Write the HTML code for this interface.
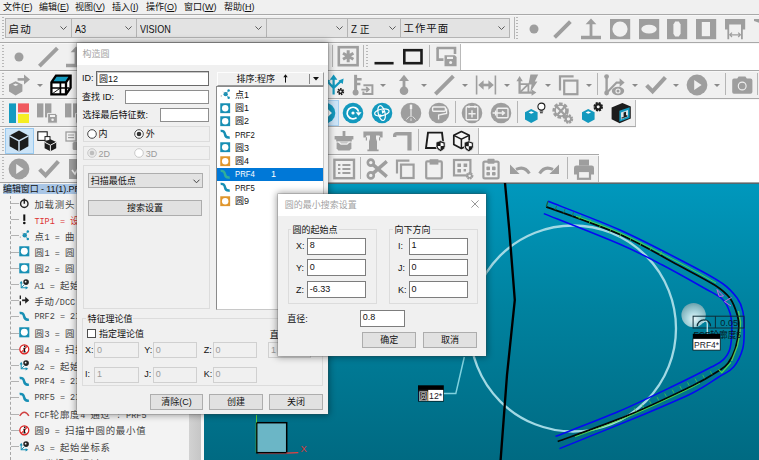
<!DOCTYPE html>
<html lang="zh-CN"><head><meta charset="utf-8"><title>构造圆</title>
<style>
html,body{margin:0;padding:0;background:#fff;}
body{width:759px;height:460px;overflow:hidden;font-family:"Liberation Sans","Noto Sans CJK SC",sans-serif;}
#root{position:relative;width:759px;height:460px;overflow:hidden;}
#root div,#root svg{position:absolute;}
.t{white-space:nowrap;line-height:12px;}
.ic{overflow:visible;}
.grip{width:2px;background-image:repeating-linear-gradient(180deg,#b8b8b8 0,#b8b8b8 1px,transparent 1px,transparent 3px);}
.sep{width:1px;background:#b5b5b5;}
.vline{width:0;border-left:1px dashed #a6a6a6;}
.hline{height:0;border-top:1px solid #b2b2b2;}
.inp{background:#fff;border:1px solid #7a7a7a;box-sizing:border-box;}
.inpd{background:#f0f0f0;border:1px solid #d0d0d0;box-sizing:border-box;}
.btn{background:#e1e1e1;border:1px solid #adadad;box-sizing:border-box;text-align:center;font-size:9px;line-height:13px;color:#111;}
.grp{border:1px solid #dcdcdc;box-sizing:border-box;}
u{text-decoration:underline;}
.inp{background:#fff;border:1px solid #6a6a6a;box-sizing:border-box;box-shadow:inset 1px 1px 0 #c8c8c8;}
.inp2{background:#fff;border:1px solid #8e8e8e;box-sizing:border-box;}
.inp3{background:#fff;border:1px solid #7d7d7d;box-sizing:border-box;}
.tr{font-family:"Liberation Mono","Noto Sans CJK SC",monospace;}
.tr .m{font-family:"Liberation Mono",monospace;font-size:8.5px;letter-spacing:0;}
.tr .c{font-family:"Noto Sans CJK SC","Liberation Sans",sans-serif;font-size:9.4px;letter-spacing:0.8px;}
.lt{display:inline-block;transform:scaleX(0.86);transform-origin:0 50%;}

</style></head>
<body>
<div id="root">
<div style="left:0px;top:0px;width:759px;height:14px;background:#f0f0f0"></div>
<div class="t" style="left:3px;top:1px;font-size:9px;color:#111;line-height:12px">文件(<u>F</u>)</div>
<div class="t" style="left:39px;top:1px;font-size:9px;color:#111;line-height:12px">编辑(<u>E</u>)</div>
<div class="t" style="left:75px;top:1px;font-size:9px;color:#111;line-height:12px">视图(<u>V</u>)</div>
<div class="t" style="left:112px;top:1px;font-size:9px;color:#111;line-height:12px">插入(<u>I</u>)</div>
<div class="t" style="left:146px;top:1px;font-size:9px;color:#111;line-height:12px">操作(<u>O</u>)</div>
<div class="t" style="left:184px;top:1px;font-size:9px;color:#111;line-height:12px">窗口(<u>W</u>)</div>
<div class="t" style="left:224px;top:1px;font-size:9px;color:#111;line-height:12px">帮助(<u>H</u>)</div>
<div style="left:0px;top:14px;width:759px;height:169px;background:#fff"></div>
<div style="left:0px;top:14px;width:759px;height:28px;background:#f0f0f0;box-sizing:border-box"></div>
<div style="left:0px;top:42px;width:461px;height:28px;background:#f0f0f0;border-right:1px solid #b9b9b9;box-sizing:border-box"></div>
<div style="left:0px;top:70px;width:759px;height:28px;background:#f0f0f0;box-sizing:border-box"></div>
<div style="left:0px;top:98px;width:636.4px;height:28px;background:#f0f0f0;border-right:1px solid #b9b9b9;box-sizing:border-box"></div>
<div style="left:0px;top:126px;width:479px;height:28px;background:#f0f0f0;border-right:1px solid #b9b9b9;box-sizing:border-box"></div>
<div style="left:0px;top:154px;width:599px;height:28px;background:#f0f0f0;border-right:1px solid #b9b9b9;box-sizing:border-box"></div>
<div style="left:0px;top:14px;width:759px;height:1px;background:#a9a9a9"></div>
<div style="left:0px;top:15px;width:759px;height:1px;background:#f7f7f7"></div>
<div style="left:0px;top:42px;width:759px;height:1px;background:#a9a9a9"></div>
<div style="left:0px;top:43px;width:759px;height:1px;background:#f7f7f7"></div>
<div style="left:0px;top:70px;width:759px;height:1px;background:#a9a9a9"></div>
<div style="left:0px;top:71px;width:759px;height:1px;background:#f7f7f7"></div>
<div style="left:0px;top:98px;width:759px;height:1px;background:#a9a9a9"></div>
<div style="left:0px;top:99px;width:759px;height:1px;background:#f7f7f7"></div>
<div style="left:0px;top:126px;width:636.4px;height:1px;background:#a9a9a9"></div>
<div style="left:0px;top:127px;width:636.4px;height:1px;background:#f7f7f7"></div>
<div style="left:0px;top:154px;width:599px;height:1px;background:#a9a9a9"></div>
<div style="left:0px;top:155px;width:599px;height:1px;background:#f7f7f7"></div>
<div style="left:0px;top:182px;width:759px;height:1px;background:#a3a3a3"></div>
<div class="grip" style="left:2px;top:17px;height:22px"></div>
<div style="left:5px;top:18px;width:67px;height:20px;background:#e3e3e3;border:1px solid #b4b4b4;box-sizing:border-box"></div>
<div class="t" style="left:8.6px;top:22.9px;font-size:10.5px;color:#111;line-height:12px;transform:scaleX(1);transform-origin:0 50%"><span style="letter-spacing:1.2px">启动</span></div>
<svg class="ic" style="left:60.4px;top:25.8px" width="7" height="4.4" viewBox="0 0 8 5"><path d="M0.5 0.5L4 4L7.5 0.5" fill="none" stroke="#555" stroke-width="1.1"/></svg>
<div style="left:71px;top:18px;width:66px;height:20px;background:#e3e3e3;border:1px solid #b4b4b4;box-sizing:border-box"></div>
<div class="t" style="left:74.6px;top:22.9px;font-size:10.8px;color:#111;line-height:12px;transform:scaleX(0.84);transform-origin:0 50%">A3</div>
<svg class="ic" style="left:125.4px;top:25.8px" width="7" height="4.4" viewBox="0 0 8 5"><path d="M0.5 0.5L4 4L7.5 0.5" fill="none" stroke="#555" stroke-width="1.1"/></svg>
<div style="left:136px;top:18px;width:131px;height:20px;background:#e3e3e3;border:1px solid #b4b4b4;box-sizing:border-box"></div>
<div class="t" style="left:139.6px;top:22.9px;font-size:10.8px;color:#111;line-height:12px;transform:scaleX(0.84);transform-origin:0 50%">VISION</div>
<svg class="ic" style="left:255.4px;top:25.8px" width="7" height="4.4" viewBox="0 0 8 5"><path d="M0.5 0.5L4 4L7.5 0.5" fill="none" stroke="#555" stroke-width="1.1"/></svg>
<div style="left:266px;top:18px;width:82px;height:20px;background:#e3e3e3;border:1px solid #b4b4b4;box-sizing:border-box"></div>
<svg class="ic" style="left:336.4px;top:25.8px" width="7" height="4.4" viewBox="0 0 8 5"><path d="M0.5 0.5L4 4L7.5 0.5" fill="none" stroke="#555" stroke-width="1.1"/></svg>
<div style="left:347px;top:18px;width:54px;height:20px;background:#e3e3e3;border:1px solid #b4b4b4;box-sizing:border-box"></div>
<div class="t" style="left:350.6px;top:22.9px;font-size:10.6px;color:#111;line-height:12px;transform:scaleX(0.92);transform-origin:0 50%">Z 正</div>
<svg class="ic" style="left:389.4px;top:25.8px" width="7" height="4.4" viewBox="0 0 8 5"><path d="M0.5 0.5L4 4L7.5 0.5" fill="none" stroke="#555" stroke-width="1.1"/></svg>
<div style="left:400px;top:18px;width:110px;height:20px;background:#e3e3e3;border:1px solid #b4b4b4;box-sizing:border-box"></div>
<div class="t" style="left:403.6px;top:22.9px;font-size:10.4px;color:#111;line-height:12px;transform:scaleX(1);transform-origin:0 50%"><span style="letter-spacing:1px">工作平面</span></div>
<svg class="ic" style="left:498.4px;top:25.8px" width="7" height="4.4" viewBox="0 0 8 5"><path d="M0.5 0.5L4 4L7.5 0.5" fill="none" stroke="#555" stroke-width="1.1"/></svg>
<div class="sep" style="left:513.5px;top:17px;height:22px"></div>
<div class="grip" style="left:516px;top:17px;height:22px"></div>
<svg class="ic" style="left:521.5px;top:16.5px" width="24" height="24" viewBox="0 0 24 24"><circle cx="12" cy="12" r="4.5" fill="#9e9e9e"/></svg>
<svg class="ic" style="left:550.25px;top:16.5px" width="24" height="24" viewBox="0 0 24 24"><path d="M4.6 20.4L20.4 4.6" stroke="#9e9e9e" stroke-width="3.9" fill="none"/></svg>
<svg class="ic" style="left:579.0px;top:16.5px" width="24" height="24" viewBox="0 0 24 24"><path d="M2 18.8H22V22.2H2Z M10.6 18.8V7.2H6.6L12 1.6L17.4 7.2H13.4V18.8Z" fill="#9e9e9e"/></svg>
<svg class="ic" style="left:607.75px;top:16.5px" width="24" height="24" viewBox="0 0 24 24"><rect x="2" y="2" width="20.2" height="20.2" fill="#9e9e9e"/><circle cx="12" cy="12.1" r="7.6" fill="#f0f0f0"/></svg>
<svg class="ic" style="left:636.5px;top:16.5px" width="24" height="24" viewBox="0 0 24 24"><rect x="2" y="2" width="20.2" height="20.2" fill="#9e9e9e"/><ellipse cx="12" cy="12.1" rx="7.7" ry="4.4" fill="#f0f0f0"/></svg>
<svg class="ic" style="left:665.25px;top:16.5px" width="24" height="24" viewBox="0 0 24 24"><rect x="2" y="2" width="20.2" height="20.2" fill="#9e9e9e"/><path d="M10.2 4.6H13.8L15.6 7.4V16.8L13.8 19.6H10.2L8.4 16.8V7.4Z" fill="#f0f0f0"/></svg>
<svg class="ic" style="left:694.0px;top:16.5px" width="24" height="24" viewBox="0 0 24 24"><rect x="2" y="2" width="20.2" height="20.2" fill="#9e9e9e"/><rect x="7.8" y="5" width="8.2" height="14.2" fill="#f0f0f0"/></svg>
<svg class="ic" style="left:722.75px;top:16.5px" width="24" height="24" viewBox="0 0 24 24"><path d="M2 2H22.2V12.6H19.8V22.2H18V7.6H6.2V22.2H4.4V12.6H2Z" fill="#9e9e9e"/><path d="M6.8 17.8H17.4M9 15.6L6.8 17.8L9 20M15.2 15.6L17.4 17.8L15.2 20" stroke="#9e9e9e" stroke-width="1.2" fill="none"/></svg>
<svg class="ic" style="left:751.5px;top:16.5px" width="24" height="24" viewBox="0 0 24 24"><path d="M2 2H22V6L8 6L2 4Z" fill="#9e9e9e"/></svg>
<div class="grip" style="left:2px;top:45px;height:22px"></div>
<svg class="ic" style="left:7.0px;top:45.0px" width="24" height="24" viewBox="0 0 24 24"><circle cx="12" cy="12" r="4.5" fill="#9e9e9e"/></svg>
<svg class="ic" style="left:35.7px;top:44.8px" width="24" height="24" viewBox="0 0 24 24"><path d="M3.4 21.2L21.4 3.2" stroke="#9e9e9e" stroke-width="3.9" fill="none"/></svg>
<svg class="ic" style="left:64.2px;top:45.0px" width="24" height="24" viewBox="0 0 24 24"><path d="M2 18.8H22V22.2H2Z M10.6 18.8V7.2H6.6L12 1.6L17.4 7.2H13.4V18.8Z" fill="#9e9e9e"/></svg>
<div class="sep" style="left:331.6px;top:45px;height:22px"></div>
<svg class="ic" style="left:336.0px;top:44.2px" width="24" height="24" viewBox="0 0 24 24"><rect x="2.8" y="3.2" width="18.8" height="18" fill="none" stroke="#9e9e9e" stroke-width="2.6"/><path d="M12.2 6.2V18.2M7 9.2L17.4 15.2M17.4 9.2L7 15.2" stroke="#9e9e9e" stroke-width="3" fill="none"/></svg>
<div class="sep" style="left:363.4px;top:45px;height:22px"></div>
<div class="grip" style="left:366px;top:45px;height:22px"></div>
<svg class="ic" style="left:364.0px;top:45.0px" width="24" height="24" viewBox="0 0 24 24"><path d="M10.5 18.2H29.6" stroke="#1c1c1c" stroke-width="2.6" fill="none"/></svg>
<svg class="ic" style="left:399.0px;top:45.0px" width="24" height="24" viewBox="0 0 24 24"><rect x="5.3" y="5.2" width="17.2" height="13" fill="none" stroke="#1c1c1c" stroke-width="2.6"/></svg>
<div class="sep" style="left:429.4px;top:45px;height:22px"></div>
<svg class="ic" style="left:434.0px;top:45.0px" width="24" height="24" viewBox="0 0 24 24"><path d="M2.6 3H21V9" stroke="#9e9e9e" stroke-width="2.6" fill="none"/><path d="M3.6 3V14.6H9.5" stroke="#9e9e9e" stroke-width="2.6" fill="none"/><path d="M10.5 10.2H20.8L22.6 12V21.2H10.5Z" fill="#9e9e9e"/><rect x="13" y="11.8" width="6" height="2.2" fill="#f0f0f0"/><circle cx="16.6" cy="17.6" r="1.5" fill="#f0f0f0"/></svg>
<div class="grip" style="left:2px;top:73px;height:22px"></div>
<svg class="ic" style="left:7.0px;top:73.0px" width="24" height="24" viewBox="0 0 24 24"><path d="M2 11.4L8.6 8.2L15.4 11.4V18.6L8.6 22.4L2 18.6Z" fill="#9e9e9e"/><path d="M6 11.7L8.6 10.4L11.4 11.7L8.6 13.1Z" fill="#f0f0f0"/><path d="M10.6 6.4H18.4" stroke="#9e9e9e" stroke-width="2.6" fill="none"/><path d="M17 1.4L23 6.4L17 11.4Z" fill="#9e9e9e"/></svg>
<svg class="ic" style="left:37px;top:83.5px" width="6" height="3" viewBox="0 0 6 3"><path d="M0 0H6L3 3Z" fill="#8a8a8a"/></svg>
<svg class="ic" style="left:49.0px;top:73.0px" width="24" height="24" viewBox="0 0 24 24"><path d="M7 2.6H21.6V14.6L17 21.4H2.4V9.4Z" fill="#fff"/><path d="M7 2.6H21.6L17 9.4H2.4Z" fill="#1399be"/><path d="M7 2.6H21.6V14.6L17 21.4H2.4V9.4Z M2.4 9.4H17V21.4M17 9.4L21.6 2.6" fill="none" stroke="#000" stroke-width="2.3" stroke-linejoin="miter"/><path d="M11.4 9.4V21.4M2.4 15H20" fill="none" stroke="#000" stroke-width="1.7"/><path d="M2.4 21.4L11.4 15" fill="none" stroke="#000" stroke-width="0.9"/></svg>
<svg class="ic" style="left:324.0px;top:73.0px" width="24" height="24" viewBox="0 0 24 24"><path d="M9.6 21.6V11.5M9.6 15L3.6 8.4M9.6 15L17.4 7.6" stroke="#1399be" stroke-width="2.2" fill="none"/><path d="M9.6 1.6L13.4 6.8H5.8Z" fill="#1399be"/><path d="M9.6 6V12" stroke="#1399be" stroke-width="2.2"/><path d="M1.4 5.6L2.2 11L6.6 7.8Z M19.6 5.6L18.8 11L14.4 7.8Z" fill="#1399be"/><circle cx="16.6" cy="18.6" r="2.6" fill="none" stroke="#1c1c1c" stroke-width="2" stroke-dasharray="1.4 0.9"/><circle cx="16.6" cy="18.6" r="1.7" fill="none" stroke="#1c1c1c" stroke-width="1.2"/></svg>
<svg class="ic" style="left:350.6px;top:73.0px" width="24" height="24" viewBox="0 0 24 24"><path d="M4.6 1.8V18.6" stroke="#9e9e9e" stroke-width="3"/><circle cx="4.6" cy="19.4" r="3" fill="#9e9e9e"/><path d="M4.6 6.2H10.6M4.6 11H9.4" stroke="#9e9e9e" stroke-width="2.6"/><path d="M12.4 12.2H21.4V21H12.4V18.4" stroke="#9e9e9e" stroke-width="2" fill="none"/><path d="M10.4 16.6H17.4M15.2 14.2L17.8 16.6L15.2 19" stroke="#9e9e9e" stroke-width="1.7" fill="none"/></svg>
<svg class="ic" style="left:379.8px;top:83.5px" width="6" height="3" viewBox="0 0 6 3"><path d="M0 0H6L3 3Z" fill="#8a8a8a"/></svg>
<svg class="ic" style="left:392.0px;top:73.0px" width="24" height="24" viewBox="0 0 24 24"><path d="M12 6V17" stroke="#9e9e9e" stroke-width="2.8"/><path d="M12 1.8L17 8H7Z" fill="#9e9e9e"/><circle cx="12" cy="17.8" r="4.3" fill="#9e9e9e"/></svg>
<svg class="ic" style="left:421px;top:83.5px" width="6" height="3" viewBox="0 0 6 3"><path d="M0 0H6L3 3Z" fill="#8a8a8a"/></svg>
<svg class="ic" style="left:432.4px;top:73.0px" width="24" height="24" viewBox="0 0 24 24"><path d="M3.4 21.2L21.4 3.2" stroke="#9e9e9e" stroke-width="3.9" fill="none"/></svg>
<svg class="ic" style="left:462.4px;top:83.5px" width="6" height="3" viewBox="0 0 6 3"><path d="M0 0H6L3 3Z" fill="#8a8a8a"/></svg>
<svg class="ic" style="left:474.4px;top:73.0px" width="24" height="24" viewBox="0 0 24 24"><path d="M2.6 2.4V21.6M21.4 2.4V21.6" stroke="#9e9e9e" stroke-width="1.6"/><path d="M7 12H17" stroke="#9e9e9e" stroke-width="2.6"/><path d="M4.2 12L9.6 7.2V16.8Z M19.8 12L14.4 7.2V16.8Z" fill="#9e9e9e"/></svg>
<svg class="ic" style="left:503.5px;top:83.5px" width="6" height="3" viewBox="0 0 6 3"><path d="M0 0H6L3 3Z" fill="#8a8a8a"/></svg>
<svg class="ic" style="left:515.4px;top:73.0px" width="24" height="24" viewBox="0 0 24 24"><path d="M15.4 1.6H23.2L19.8 8.4H22.4L15.2 19.6L16.6 11.6H13.4Z" fill="#9e9e9e"/><path d="M4.6 6.4V19.6H17.6" stroke="#9e9e9e" stroke-width="2.3" fill="none"/><path d="M4.6 3L7.8 8.2H1.4Z M21.4 19.6L16.6 22.8V16.4Z" fill="#9e9e9e"/><path d="M4.6 11.2H13.4V19.6M4.6 19.6L13.4 11.2" stroke="#9e9e9e" stroke-width="1.8" fill="none"/></svg>
<svg class="ic" style="left:544.6px;top:83.5px" width="6" height="3" viewBox="0 0 6 3"><path d="M0 0H6L3 3Z" fill="#8a8a8a"/></svg>
<svg class="ic" style="left:557.0px;top:73.0px" width="24" height="24" viewBox="0 0 24 24"><path d="M3 17.4V3.4H16.6" stroke="#9e9e9e" stroke-width="2.2" fill="none"/><rect x="7.2" y="7.6" width="13.2" height="13.6" stroke="#9e9e9e" stroke-width="2.2" fill="none"/></svg>
<svg class="ic" style="left:586px;top:83.5px" width="6" height="3" viewBox="0 0 6 3"><path d="M0 0H6L3 3Z" fill="#8a8a8a"/></svg>
<div class="sep" style="left:597px;top:73px;height:22px"></div>
<svg class="ic" style="left:602.0px;top:73.0px" width="24" height="24" viewBox="0 0 24 24"><path d="M4.6 4V20" stroke="#9e9e9e" stroke-width="2.4"/><circle cx="4.6" cy="3.6" r="2.4" fill="#9e9e9e"/><circle cx="4.6" cy="20" r="2.4" fill="#9e9e9e"/><path d="M5 19.6L14.6 9.6H19" stroke="#9e9e9e" stroke-width="2.2" fill="none"/><path d="M17.6 5.2L22.6 9.6L17.6 14Z" fill="#9e9e9e"/><ellipse cx="16" cy="18" rx="6.2" ry="4.2" fill="#9e9e9e"/><circle cx="16" cy="18" r="2.6" fill="#f0f0f0"/><circle cx="16" cy="18" r="1.5" fill="#9e9e9e"/></svg>
<svg class="ic" style="left:632px;top:83.5px" width="6" height="3" viewBox="0 0 6 3"><path d="M0 0H6L3 3Z" fill="#8a8a8a"/></svg>
<svg class="ic" style="left:644.0px;top:73.0px" width="24" height="24" viewBox="0 0 24 24"><path d="M2.6 12.4L8.6 18.4L21.4 4.4" stroke="#9e9e9e" stroke-width="4.1" fill="none"/></svg>
<svg class="ic" style="left:673px;top:83.5px" width="6" height="3" viewBox="0 0 6 3"><path d="M0 0H6L3 3Z" fill="#8a8a8a"/></svg>
<svg class="ic" style="left:685.0px;top:72.8px" width="24" height="24" viewBox="0 0 24 24"><circle cx="12" cy="12" r="10.4" fill="#9e9e9e"/><path d="M9.2 7L16.6 12L9.2 17Z" fill="#f0f0f0"/></svg>
<svg class="ic" style="left:714px;top:83.5px" width="6" height="3" viewBox="0 0 6 3"><path d="M0 0H6L3 3Z" fill="#8a8a8a"/></svg>
<div class="sep" style="left:725px;top:73px;height:22px"></div>
<svg class="ic" style="left:730.0px;top:73.0px" width="24" height="24" viewBox="0 0 24 24"><path d="M4 5.6H7.2L8.6 3.6H15.4L16.8 5.6H20.4Q22.4 5.6 22.4 7.4V19Q22.4 20.8 20.4 20.8H4Q2.2 20.8 2.2 19V7.4Q2.2 5.6 4 5.6Z" fill="#9e9e9e"/><circle cx="12.2" cy="13" r="3.9" fill="none" stroke="#f0f0f0" stroke-width="1.1"/></svg>
<div class="sep" style="left:757px;top:73px;height:22px"></div>
<div class="grip" style="left:2px;top:101px;height:22px"></div>
<svg class="ic" style="left:7.0px;top:101.0px" width="24" height="24" viewBox="0 0 24 24"><rect x="2" y="2.4" width="7" height="19.6" fill="#149bc0"/><rect x="11" y="2.4" width="11" height="9" fill="#f0595e"/><rect x="11" y="13" width="11" height="9" fill="#f5ee23"/></svg>
<svg class="ic" style="left:35.0px;top:101.0px" width="24" height="24" viewBox="0 0 24 24"><rect x="2" y="2.4" width="6.4" height="14" fill="#9e9e9e"/><rect x="10" y="2.4" width="6.4" height="14" fill="#9e9e9e"/><path d="M12.6 12.4H20.6L22.4 14.2V22.2H12.6Z" fill="#9e9e9e" stroke="#f0f0f0" stroke-width="1"/><rect x="15" y="14" width="5" height="2" fill="#f0f0f0"/><circle cx="17.6" cy="18.8" r="1.3" fill="#f0f0f0"/></svg>
<svg class="ic" style="left:63.0px;top:101.0px" width="24" height="24" viewBox="0 0 24 24"><rect x="2" y="2.4" width="6.4" height="14" fill="#9e9e9e"/><rect x="10" y="2.4" width="6.4" height="14" fill="#9e9e9e"/><path d="M12.6 12.4H20.6L22.4 14.2V22.2H12.6Z" fill="#9e9e9e" stroke="#f0f0f0" stroke-width="1"/><rect x="15" y="14" width="5" height="2" fill="#f0f0f0"/><circle cx="17.6" cy="18.8" r="1.3" fill="#f0f0f0"/></svg>
<div style="left:314px;top:100px;width:25px;height:26px;background:#cce4f7;border:1px solid #a6cff0;box-sizing:border-box"></div>
<svg class="ic" style="left:312.8px;top:101.2px" width="24" height="24" viewBox="0 0 24 24"><circle cx="12" cy="12" r="10.3" fill="#1399be"/><path d="M5 12H17M13.4 8L17.6 12L13.4 16" stroke="#fff" stroke-width="1.8" fill="none"/></svg>
<svg class="ic" style="left:341.0px;top:101.2px" width="24" height="24" viewBox="0 0 24 24"><circle cx="12" cy="12" r="10.3" fill="#1399be"/><path d="M17.6 10.6A5.8 5.8 0 1 0 15.6 16.6" stroke="#fff" stroke-width="1.7" fill="none"/><circle cx="12" cy="12" r="1.6" fill="#fff"/><path d="M14.6 11.2H20.6L17.6 14.8Z" fill="#fff"/></svg>
<svg class="ic" style="left:369.8px;top:101.2px" width="24" height="24" viewBox="0 0 24 24"><circle cx="12" cy="12" r="10.3" fill="#1399be"/><ellipse cx="12" cy="11.4" rx="7.4" ry="3.2" stroke="#fff" stroke-width="1.2" fill="none" transform="rotate(-12 12 12)"/><ellipse cx="11.6" cy="12" rx="3.4" ry="7.6" stroke="#fff" stroke-width="1.2" fill="none" transform="rotate(-14 12 12)"/><path d="M11.6 9L15.4 10.6L12.2 12.8Z M9.4 13L13 14.6L9.8 16.6Z" fill="#fff"/></svg>
<svg class="ic" style="left:398.5px;top:101.2px" width="24" height="24" viewBox="0 0 24 24"><circle cx="12" cy="12" r="10.3" fill="#9e9e9e"/><path d="M12 3.6V8" stroke="#f0f0f0" stroke-width="2.4"/><path d="M12 8V16" stroke="#f0f0f0" stroke-width="1.1"/><path d="M12 17.4V20M10.4 15.4L7.4 18.6M13.6 15.4L16.6 18.6" stroke="#f0f0f0" stroke-width="1" opacity="0.85"/></svg>
<svg class="ic" style="left:426.8px;top:101.2px" width="24" height="24" viewBox="0 0 24 24"><circle cx="12" cy="12" r="10.3" fill="#9e9e9e"/><rect x="5.6" y="6" width="12.8" height="4.2" rx="1" stroke="#f0f0f0" stroke-width="1.4" fill="none"/><path d="M18.4 8.2H19.6V12.4L11.6 14V18.4" stroke="#f0f0f0" stroke-width="1.3" fill="none"/></svg>
<div class="sep" style="left:455.4px;top:101px;height:22px"></div>
<svg class="ic" style="left:460.3px;top:101.2px" width="24" height="24" viewBox="0 0 24 24"><circle cx="12" cy="12" r="10.3" fill="#9e9e9e"/><rect x="6.2" y="5.8" width="11.6" height="13" rx="1" stroke="#f0f0f0" stroke-width="1.4" fill="none"/><path d="M9 4.4V7M15 4.4V7M12 9.2V16.4M8.4 12.8H15.6" stroke="#f0f0f0" stroke-width="1.4"/></svg>
<svg class="ic" style="left:489.0px;top:101.2px" width="24" height="24" viewBox="0 0 24 24"><circle cx="12" cy="12" r="10.3" fill="#9e9e9e"/><rect x="8" y="7.2" width="11" height="9.6" rx="1" stroke="#f0f0f0" stroke-width="1.4" fill="none"/><path d="M3.6 12H15M6.6 9.6V14.4M13 10L15.4 12L13 14" stroke="#f0f0f0" stroke-width="1.4" fill="none"/></svg>
<div class="sep" style="left:517px;top:101px;height:22px"></div>
<svg class="ic" style="left:522.5px;top:101.0px" width="24" height="24" viewBox="0 0 24 24"><g transform="translate(2 7.6) scale(0.94)"><path d="M0 4L6.6 0.4L13.4 4V11.6L6.6 15.4L0 11.6Z" fill="#1399be"/><path d="M3.8 4.1L6.6 2.7L9.6 4.1L6.6 5.6Z" fill="#fff"/></g><circle cx="18.4" cy="5.6" r="3.5" fill="#fff" stroke="#1c1c1c" stroke-width="1.1"/><path d="M16.6 10H20.2M17 11.8H19.8" stroke="#1c1c1c" stroke-width="1.1"/></svg>
<svg class="ic" style="left:550.5px;top:101.0px" width="24" height="24" viewBox="0 0 24 24"><circle cx="9.6" cy="9.6" r="6.6" fill="none" stroke="#9e9e9e" stroke-width="3.2" stroke-dasharray="3.4 1.5"/><circle cx="9.6" cy="9.6" r="5.6" fill="none" stroke="#9e9e9e" stroke-width="1.6"/><path d="M5.6 5.4L14.4 14.4M14 5.6L6.6 13.4" stroke="#9e9e9e" stroke-width="2.2"/><circle cx="17.4" cy="18" r="3.3" fill="none" stroke="#9e9e9e" stroke-width="3" stroke-dasharray="1.75 0.84"/><circle cx="17.4" cy="18" r="2.6" fill="none" stroke="#9e9e9e" stroke-width="1.8"/></svg>
<svg class="ic" style="left:579.8px;top:101.0px" width="24" height="24" viewBox="0 0 24 24"><g transform="translate(2 7.6) scale(0.94)"><path d="M0 4L6.6 0.4L13.4 4V11.6L6.6 15.4L0 11.6Z" fill="#1399be"/><path d="M3.8 4.1L6.6 2.7L9.6 4.1L6.6 5.6Z" fill="#fff"/></g><circle cx="18.2" cy="5.8" r="3.3" fill="none" stroke="#1c1c1c" stroke-width="3" stroke-dasharray="1.75 0.84"/><circle cx="18.2" cy="5.8" r="2.6" fill="none" stroke="#1c1c1c" stroke-width="2"/></svg>
<svg class="ic" style="left:608.8px;top:101.0px" width="24" height="24" viewBox="0 0 24 24"><path d="M2.6 6.6L13.4 2L21.8 5.4V17.6L10.6 22.2L2.6 18.2Z" fill="#1c1c1c"/><path d="M10.4 9.8L20.6 6.2V17L10.4 20.8Z" fill="#1399be"/><path d="M12 11.4L19 9V15.6L12 18.4Z" fill="#d9e3e6"/><path d="M14.6 11.6L17 10.8V14.2H18.4V15.6L12.6 17.8V16.2H14.6Z" fill="#1c1c1c"/></svg>
<div class="grip" style="left:2px;top:129px;height:22px"></div>
<div style="left:5px;top:128px;width:29px;height:26px;background:#cce4f7;border:1px solid #99c9ef;box-sizing:border-box"></div>
<svg class="ic" style="left:7.0px;top:129.0px" width="24" height="24" viewBox="0 0 24 24"><path d="M12 1.6L21.4 6.4V17.2L12 22.4L2.6 17.2V6.4Z" fill="#1c1c1c"/><path d="M2.6 6.8L12 11.8L21.4 6.8M12 11.8V22.4" stroke="#cfe3f4" stroke-width="1.5" fill="none"/></svg>
<svg class="ic" style="left:35.0px;top:129.0px" width="24" height="24" viewBox="0 0 24 24"><rect x="2.8" y="2.8" width="9.4" height="8.6" fill="#fff" stroke="#1c1c1c" stroke-width="1.1"/><rect x="10" y="7.6" width="5" height="4.4" fill="#fff" stroke="#1c1c1c" stroke-width="1"/><path d="M15.4 10.2L21.2 13V19.2L15.4 22.2L9.6 19.2V13Z" fill="#1c1c1c"/><path d="M9.6 13.2L15.4 16.2L21.2 13.2M15.4 16.2V22.2" stroke="#f0f0f0" stroke-width="1" fill="none"/></svg>
<svg class="ic" style="left:63.0px;top:129.0px" width="24" height="24" viewBox="0 0 24 24"><rect x="3" y="3" width="10" height="9" fill="none" stroke="#9e9e9e" stroke-width="1.3"/><path d="M5 6H11M5 8.6H11" stroke="#9e9e9e" stroke-width="1.1"/><rect x="9.6" y="13" width="8" height="8" rx="1.5" fill="#9e9e9e"/></svg>
<svg class="ic" style="left:332.0px;top:129.0px" width="24" height="24" viewBox="0 0 24 24"><path d="M10.6 2H13.4V7H21.4V10.6H19.8V12.6H4.2V10.6H2.6V7H10.6Z" fill="#9e9e9e"/><path d="M4.6 13.6H19.4V19.6L17.6 21.6H6.4L4.6 19.6Z" fill="#9e9e9e"/><path d="M6.4 12.8L9 15H15L17.6 12.8" stroke="#f0f0f0" stroke-width="1.3" fill="none"/></svg>
<svg class="ic" style="left:360.8px;top:129.0px" width="24" height="24" viewBox="0 0 24 24"><path d="M2.4 2.6H21.6V8.4H19.4L18.4 6.6H15V9.4L16 12.6V20.6H17.6V22.2H6.4V20.6H8V12.6L9 9.4V6.6H5.6L4.6 8.4H2.4Z" fill="#9e9e9e"/><path d="M5.4 8.2V11.4M18.6 8.2V11.4" stroke="#9e9e9e" stroke-width="1.2"/></svg>
<svg class="ic" style="left:389.6px;top:129.0px" width="24" height="24" viewBox="0 0 24 24"><path d="M3 6.6Q3 3 7 3H21.6V21.6H17.4V6.6H6.4V8H3Z" fill="#9e9e9e"/></svg>
<div class="sep" style="left:418px;top:129px;height:22px"></div>
<svg class="ic" style="left:423.0px;top:129.0px" width="24" height="24" viewBox="0 0 24 24"><path d="M5 3.6H19L20.8 19H3Z" fill="#f6f6f6" stroke="#1c1c1c" stroke-width="1.9" stroke-linejoin="miter"/><path d="M17.6 11.6L22.2 13.2V17.6Q22.2 20.6 17.6 22.6Q13 20.6 13 17.6V13.2Z" fill="#1c1c1c" stroke="#f0f0f0" stroke-width="0.8"/><path d="M17.6 13.6V21M14.4 16.8H20.8" stroke="#fff" stroke-width="0.0"/><path d="M17.6 13.4L20.6 14.4V17H17.6Z M14.6 17H17.6V20.8Q14.6 19.4 14.6 17Z" fill="#fff"/></svg>
<svg class="ic" style="left:451.0px;top:129.0px" width="24" height="24" viewBox="0 0 24 24"><path d="M10.4 2.6L18.2 6.2V15.4L10.4 19.4L2.8 15.4V6.2Z" fill="#f6f6f6" stroke="#1c1c1c" stroke-width="1.7" stroke-linejoin="round"/><path d="M2.8 6.4L10.4 10.2L18.2 6.4M10.4 10.2V19.4" stroke="#1c1c1c" stroke-width="1.5" fill="none"/><path d="M17.8 11.8L22.4 13.4V17.8Q22.4 20.8 17.8 22.8Q13.2 20.8 13.2 17.8V13.4Z" fill="#1c1c1c" stroke="#f0f0f0" stroke-width="0.8"/><path d="M17.8 13.6L20.8 14.6V17.2H17.8Z M14.8 17.2H17.8V21Q14.8 19.6 14.8 17.2Z" fill="#fff"/></svg>
<div class="grip" style="left:2px;top:157px;height:22px"></div>
<svg class="ic" style="left:7.0px;top:157.4px" width="24" height="24" viewBox="0 0 24 24"><circle cx="12" cy="12" r="10.4" fill="#9e9e9e"/><path d="M9.2 7L16.6 12L9.2 17Z" fill="#f0f0f0"/></svg>
<svg class="ic" style="left:36.5px;top:157.0px" width="24" height="24" viewBox="0 0 24 24"><path d="M2.6 12.4L8.6 18.4L21.4 4.4" stroke="#9e9e9e" stroke-width="4.1" fill="none"/></svg>
<svg class="ic" style="left:67.0px;top:157.4px" width="24" height="24" viewBox="0 0 24 24"><rect x="2" y="2" width="14" height="20" fill="#9e9e9e"/><path d="M5 13L8 17L13 8" stroke="#f0f0f0" stroke-width="1.6" fill="none"/></svg>
<svg class="ic" style="left:332.0px;top:157.0px" width="24" height="24" viewBox="0 0 24 24"><rect x="2.4" y="2.8" width="19.6" height="18.4" fill="none" stroke="#9e9e9e" stroke-width="2.4"/><path d="M6 8H8.4M6 12H8.4M6 16H8.4M10.4 8H18.4M10.4 12H18.4M10.4 16H18.4" stroke="#9e9e9e" stroke-width="2.2"/></svg>
<div class="sep" style="left:360px;top:157px;height:22px"></div>
<svg class="ic" style="left:365.0px;top:157.0px" width="24" height="24" viewBox="0 0 24 24"><circle cx="5.8" cy="5.6" r="3" fill="none" stroke="#9e9e9e" stroke-width="2.6"/><circle cx="5.8" cy="18.4" r="3" fill="none" stroke="#9e9e9e" stroke-width="2.6"/><path d="M8 7.6L21.8 19.6M8 16.4L21.8 4.4" stroke="#9e9e9e" stroke-width="3.4" fill="none"/></svg>
<svg class="ic" style="left:393.0px;top:157.0px" width="24" height="24" viewBox="0 0 24 24"><path d="M4 16.6V3.6H16.4" stroke="#9e9e9e" stroke-width="2.2" fill="none"/><rect x="8" y="7.6" width="12.6" height="13.4" stroke="#9e9e9e" stroke-width="2.2" fill="none"/></svg>
<svg class="ic" style="left:422.0px;top:157.0px" width="24" height="24" viewBox="0 0 24 24"><rect x="4.2" y="4.4" width="15.6" height="17" rx="1" fill="none" stroke="#9e9e9e" stroke-width="2.2"/><rect x="7.6" y="2.2" width="8.8" height="5.4" fill="#9e9e9e"/></svg>
<svg class="ic" style="left:451.0px;top:157.0px" width="24" height="24" viewBox="0 0 24 24"><rect x="3" y="3" width="16.4" height="15.4" fill="none" stroke="#9e9e9e" stroke-width="2.2"/><path d="M6.4 6.4H10V10H6.4Z M12.6 6.4H16.2V10H12.6Z M6.4 12H10V15.6H6.4Z M12.6 12H15V14.4H12.6Z" fill="#9e9e9e"/><circle cx="18.6" cy="18.8" r="2.8" fill="#f0f0f0"/><circle cx="18.6" cy="18.8" r="2.6" fill="none" stroke="#9e9e9e" stroke-width="2.4" stroke-dasharray="1.5 0.7"/><circle cx="18.6" cy="18.8" r="2" fill="none" stroke="#9e9e9e" stroke-width="1.4"/></svg>
<svg class="ic" style="left:479.0px;top:157.0px" width="24" height="24" viewBox="0 0 24 24"><rect x="4.4" y="4.6" width="15.2" height="16.8" rx="1.4" fill="none" stroke="#9e9e9e" stroke-width="2.2"/><rect x="8.4" y="1.8" width="7.2" height="5" rx="1" fill="#9e9e9e"/><rect x="7.4" y="9.6" width="3.6" height="3.6" rx="0.8" fill="#9e9e9e"/><rect x="13" y="9.6" width="3.6" height="3.6" rx="0.8" fill="#9e9e9e"/><rect x="7.4" y="15" width="3.6" height="3.6" rx="0.8" fill="#9e9e9e"/><rect x="13" y="15" width="3.6" height="3.6" rx="0.8" fill="#9e9e9e"/></svg>
<svg class="ic" style="left:508.0px;top:157.0px" width="24" height="24" viewBox="0 0 24 24"><path d="M8 12.4Q16.6 8.4 21.4 16.6" stroke="#9e9e9e" stroke-width="3" fill="none"/><path d="M2 7.4V17H11.6Z" fill="#9e9e9e"/></svg>
<svg class="ic" style="left:537.0px;top:157.0px" width="24" height="24" viewBox="0 0 24 24"><path d="M16 12.4Q7.4 8.4 2.6 16.6" stroke="#9e9e9e" stroke-width="3" fill="none"/><path d="M22 7.4V17H12.4Z" fill="#9e9e9e"/></svg>
<div class="sep" style="left:567px;top:157px;height:22px"></div>
<svg class="ic" style="left:572.0px;top:157.0px" width="24" height="24" viewBox="0 0 24 24"><rect x="7" y="2.6" width="10" height="6" fill="#9e9e9e"/><path d="M4.4 8.4H19.6Q22 8.4 22 10.8V17.4H2V10.8Q2 8.4 4.4 8.4Z" fill="#9e9e9e"/><rect x="6" y="14" width="12" height="7.8" fill="#f0f0f0" stroke="#9e9e9e" stroke-width="2.2"/></svg>
<div style="left:0px;top:183px;width:188.5px;height:277px;background:#f3f3f3"></div>
<div style="left:188.5px;top:183px;width:12px;height:277px;background:linear-gradient(90deg,#d2d2d2,#c6c6c6)"></div>
<div style="left:200.5px;top:183px;width:3.5px;height:277px;background:#f6f6f6"></div>
<div style="left:3px;top:184px;width:75px;height:10px;background:#a9c6e6"></div>
<div class="t" style="left:3px;top:183px;font-size:9px;color:#111;line-height:12px;letter-spacing:-0.1px">编辑窗口 - 11(1).PR</div>
<div class="vline" style="left:10px;top:196px;height:264px"></div>
<div class="hline" style="left:11px;top:203.0px;width:8px"></div>
<svg class="ic" style="left:19.2px;top:197.7px" width="10.6" height="10.6" viewBox="0 0 24 24"><circle cx="12" cy="13" r="8.4" fill="none" stroke="#222" stroke-width="3.2"/><path d="M12 1.5V13" stroke="#222" stroke-width="3.4"/><path d="M12 2V12" stroke="#f3f3f3" stroke-width="0"/></svg>
<div class="t tr" style="left:34.4px;top:197.6px;font-size:9.5px;color:#444;line-height:12px;white-space:pre"><span class="c">加载测头</span></div>
<div class="hline" style="left:11px;top:219.2px;width:8px"></div>
<svg class="ic" style="left:19.2px;top:213.89999999999998px" width="10.6" height="10.6" viewBox="0 0 24 24"><path d="M12 1V15.5" stroke="#111" stroke-width="4.6"/><circle cx="12" cy="20.4" r="3" fill="#111"/></svg>
<div class="t tr" style="left:34.4px;top:213.79999999999998px;font-size:9.5px;color:#d33;line-height:12px;white-space:pre"><span class="m">TIP1 = </span><span class="c">设</span></div>
<div class="hline" style="left:11px;top:235.4px;width:8px"></div>
<svg class="ic" style="left:19.2px;top:230.1px" width="10.6" height="10.6" viewBox="0 0 24 24"><circle cx="13" cy="12" r="5" fill="#178fb4"/><circle cx="20" cy="3.6" r="2.8" fill="#178fb4"/><circle cx="20" cy="20.4" r="2.8" fill="#178fb4"/><path d="M13 12L20 3.6M13 12L20 20.4" stroke="#178fb4" stroke-width="1.4"/><circle cx="3" cy="16" r="1.4" fill="#999"/><path d="M6 6L14 12" stroke="#999" stroke-width="0.8"/></svg>
<div class="t tr" style="left:34.4px;top:230.0px;font-size:9.5px;color:#444;line-height:12px;white-space:pre"><span class="c">点</span><span class="m">1 = </span><span class="c">曲</span></div>
<div class="hline" style="left:11px;top:251.6px;width:8px"></div>
<svg class="ic" style="left:19.2px;top:246.29999999999998px" width="10.6" height="10.6" viewBox="0 0 24 24"><rect x="0.6" y="0.6" width="22.8" height="22.8" fill="#178fb4"/><circle cx="12" cy="12" r="7.9" fill="#fff"/></svg>
<div class="t tr" style="left:34.4px;top:246.2px;font-size:9.5px;color:#444;line-height:12px;white-space:pre"><span class="c">圆</span><span class="m">1 = </span><span class="c">圆</span></div>
<div class="hline" style="left:11px;top:267.8px;width:8px"></div>
<svg class="ic" style="left:19.2px;top:262.5px" width="10.6" height="10.6" viewBox="0 0 24 24"><rect x="0.6" y="0.6" width="22.8" height="22.8" fill="#178fb4"/><circle cx="12" cy="12" r="7.9" fill="#fff"/></svg>
<div class="t tr" style="left:34.4px;top:262.40000000000003px;font-size:9.5px;color:#444;line-height:12px;white-space:pre"><span class="c">圆</span><span class="m">2 = </span><span class="c">圆</span></div>
<div class="hline" style="left:11px;top:284.0px;width:8px"></div>
<svg class="ic" style="left:19.2px;top:278.7px" width="10.6" height="10.6" viewBox="0 0 24 24"><circle cx="16" cy="7" r="6.4" fill="#222"/><circle cx="15" cy="6" r="2" fill="#f3f3f3"/><path d="M5 8V20H17" stroke="#178fb4" stroke-width="2.4" fill="none"/><path d="M5 4L8.6 10H1.4Z M21 20L15 23.6V16.4Z" fill="#178fb4"/><path d="M5 20L12 13" stroke="#178fb4" stroke-width="2.2"/></svg>
<div class="t tr" style="left:34.4px;top:278.6px;font-size:9.5px;color:#444;line-height:12px;white-space:pre"><span class="m">A1 = </span><span class="c">起始</span></div>
<div class="hline" style="left:11px;top:300.2px;width:8px"></div>
<svg class="ic" style="left:19.2px;top:294.9px" width="10.6" height="10.6" viewBox="0 0 24 24"><path d="M3 1V9" stroke="#222" stroke-width="3"/><path d="M3 14V23" stroke="#222" stroke-width="3"/><path d="M7 12H16" stroke="#222" stroke-width="4"/><path d="M14 4L23 12L14 20Z" fill="#222"/></svg>
<div class="t tr" style="left:34.4px;top:294.8px;font-size:9.5px;color:#444;line-height:12px;white-space:pre"><span class="c">手动</span><span class="m">/DCC</span></div>
<div class="hline" style="left:11px;top:316.4px;width:8px"></div>
<svg class="ic" style="left:19.2px;top:311.09999999999997px" width="10.6" height="10.6" viewBox="0 0 24 24"><path d="M1.5 4.5Q10 3 11.5 12Q13 21 22.5 19.5" stroke="#178fb4" stroke-width="5.6" fill="none"/></svg>
<div class="t tr" style="left:34.4px;top:311.0px;font-size:9.5px;color:#444;line-height:12px;white-space:pre"><span class="m">PRF2 = 2I</span></div>
<div class="hline" style="left:11px;top:332.6px;width:8px"></div>
<svg class="ic" style="left:19.2px;top:327.3px" width="10.6" height="10.6" viewBox="0 0 24 24"><rect x="0.6" y="0.6" width="22.8" height="22.8" fill="#178fb4"/><circle cx="12" cy="12" r="7.9" fill="#fff"/></svg>
<div class="t tr" style="left:34.4px;top:327.20000000000005px;font-size:9.5px;color:#444;line-height:12px;white-space:pre"><span class="c">圆</span><span class="m">3 = </span><span class="c">圆</span></div>
<div class="hline" style="left:11px;top:348.8px;width:8px"></div>
<svg class="ic" style="left:19.2px;top:343.49999999999994px" width="10.6" height="10.6" viewBox="0 0 24 24"><circle cx="12" cy="12" r="10.2" fill="#fff" stroke="#dc1f1f" stroke-width="2.8"/><path d="M5 19L19 5" stroke="#dc1f1f" stroke-width="2.4"/><path d="M12.6 9.6V18M10 9.8H12.6M10 18H15" stroke="#111" stroke-width="2.6" fill="none"/><circle cx="13" cy="5.4" r="1.9" fill="#111"/></svg>
<div class="t tr" style="left:34.4px;top:343.4px;font-size:9.5px;color:#444;line-height:12px;white-space:pre"><span class="c">圆</span><span class="m">4 = </span><span class="c">扫描</span></div>
<div class="hline" style="left:11px;top:365.0px;width:8px"></div>
<svg class="ic" style="left:19.2px;top:359.7px" width="10.6" height="10.6" viewBox="0 0 24 24"><circle cx="16" cy="7" r="6.4" fill="#222"/><circle cx="15" cy="6" r="2" fill="#f3f3f3"/><path d="M5 8V20H17" stroke="#178fb4" stroke-width="2.4" fill="none"/><path d="M5 4L8.6 10H1.4Z M21 20L15 23.6V16.4Z" fill="#178fb4"/><path d="M5 20L12 13" stroke="#178fb4" stroke-width="2.2"/></svg>
<div class="t tr" style="left:34.4px;top:359.6px;font-size:9.5px;color:#444;line-height:12px;white-space:pre"><span class="m">A2 = </span><span class="c">起始</span></div>
<div class="hline" style="left:11px;top:381.2px;width:8px"></div>
<svg class="ic" style="left:19.2px;top:375.9px" width="10.6" height="10.6" viewBox="0 0 24 24"><path d="M1.5 4.5Q10 3 11.5 12Q13 21 22.5 19.5" stroke="#178fb4" stroke-width="5.6" fill="none"/></svg>
<div class="t tr" style="left:34.4px;top:375.8px;font-size:9.5px;color:#444;line-height:12px;white-space:pre"><span class="m">PRF4 = 2I</span></div>
<div class="hline" style="left:11px;top:397.4px;width:8px"></div>
<svg class="ic" style="left:19.2px;top:392.09999999999997px" width="10.6" height="10.6" viewBox="0 0 24 24"><path d="M1.5 4.5Q10 3 11.5 12Q13 21 22.5 19.5" stroke="#178fb4" stroke-width="5.6" fill="none"/></svg>
<div class="t tr" style="left:34.4px;top:392.0px;font-size:9.5px;color:#444;line-height:12px;white-space:pre"><span class="m">PRF5 = 2I</span></div>
<div class="hline" style="left:11px;top:413.6px;width:8px"></div>
<svg class="ic" style="left:19.2px;top:408.3px" width="10.6" height="10.6" viewBox="0 0 24 24"><path d="M1.6 18Q12 1 22.4 18" stroke="#cf4040" stroke-width="3.2" fill="none"/></svg>
<div class="t tr" style="left:34.4px;top:408.20000000000005px;font-size:9.5px;color:#444;line-height:12px;white-space:pre"><span class="m">FCF</span><span class="c">轮廓度</span><span class="m">4 </span><span class="c">通过</span><span class="m"> : PRF5</span></div>
<div class="hline" style="left:11px;top:429.8px;width:8px"></div>
<svg class="ic" style="left:19.2px;top:424.49999999999994px" width="10.6" height="10.6" viewBox="0 0 24 24"><circle cx="12" cy="12" r="10.2" fill="#fff" stroke="#dc1f1f" stroke-width="2.8"/><path d="M5 19L19 5" stroke="#dc1f1f" stroke-width="2.4"/><path d="M12.6 9.6V18M10 9.8H12.6M10 18H15" stroke="#111" stroke-width="2.6" fill="none"/><circle cx="13" cy="5.4" r="1.9" fill="#111"/></svg>
<div class="t tr" style="left:34.4px;top:424.4px;font-size:9.5px;color:#444;line-height:12px;white-space:pre"><span class="c">圆</span><span class="m">9 = </span><span class="c">扫描中圆的最小值</span></div>
<div class="hline" style="left:11px;top:446.0px;width:8px"></div>
<svg class="ic" style="left:19.2px;top:440.7px" width="10.6" height="10.6" viewBox="0 0 24 24"><circle cx="16" cy="7" r="6.4" fill="#222"/><circle cx="15" cy="6" r="2" fill="#f3f3f3"/><path d="M5 8V20H17" stroke="#178fb4" stroke-width="2.4" fill="none"/><path d="M5 4L8.6 10H1.4Z M21 20L15 23.6V16.4Z" fill="#178fb4"/><path d="M5 20L12 13" stroke="#178fb4" stroke-width="2.2"/></svg>
<div class="t tr" style="left:34.4px;top:440.6px;font-size:9.5px;color:#444;line-height:12px;white-space:pre"><span class="m">A3 = </span><span class="c">起始坐标系</span></div>
<div class="hline" style="left:11px;top:462.2px;width:8px"></div>
<div class="t tr" style="left:34.4px;top:456.8px;font-size:9.5px;color:#444;line-height:12px;white-space:pre"><span class="m">= </span><span class="c">坐标系</span><span class="m"> </span><span class="c">通过</span></div>
<svg id="view" style="left:204px;top:183px" width="555" height="277" viewBox="0 0 555 277">
<defs><linearGradient id="bg" x1="0" y1="0" x2="0" y2="1"><stop offset="0" stop-color="#0098bd"/><stop offset="0.45" stop-color="#00829f"/><stop offset="1" stop-color="#006a82"/></linearGradient><radialGradient id="ball" cx="0.52" cy="0.66" r="0.68"><stop offset="0" stop-color="#f4fbfc"/><stop offset="0.35" stop-color="#bfe2e8"/><stop offset="0.75" stop-color="#8fbcc4"/><stop offset="1" stop-color="#6a9ea9"/></radialGradient></defs>
<rect x="0" y="0" width="555" height="277" fill="url(#bg)"/>
<rect x="0" y="0" width="555" height="1" fill="#55686f"/>
<circle cx="369" cy="145.5" r="103" fill="none" stroke="#a2d9e4" stroke-width="2.3"/>
<path d="M301 0L305.3 47L310.79999999999995 117L303 192L296.6 277" fill="none" stroke="#000" stroke-width="2.35" stroke-linejoin="round"/>
<path d="M342.2 23.8C354.5 28.4 394.0 41.8 416.0 51.5C438.0 61.2 458.2 73.5 474.0 82.0C489.8 90.5 502.3 96.8 511.0 102.3C519.7 107.9 522.3 110.4 526.0 115.3C529.7 120.3 531.8 127.1 533.3 132.0C534.8 136.9 535.1 139.2 534.8 144.8C534.5 150.4 533.2 159.6 531.4 165.5C529.6 171.4 526.8 176.6 524.0 180.3C521.2 184.0 520.6 184.0 514.8 187.7C509.0 191.4 504.1 195.1 489.0 202.5C473.9 209.9 446.6 223.1 424.0 232.4C401.4 241.7 365.4 254.2 353.7 258.5" fill="none" stroke="#060a06" stroke-width="1.8"/>
<path d="M372.0 33.2C379.3 36.0 398.8 42.2 416.0 49.9C433.2 57.6 459.0 71.3 475.0 79.6C491.0 88.0 505.8 96.6 512.0 100.0" fill="none" stroke="#58e83a" stroke-width="1" opacity="0.85"/>
<path d="M496.0 200.2C492.7 201.9 488.0 204.6 476.0 210.2C464.0 215.8 441.5 226.5 424.0 233.8C406.5 241.1 379.8 250.5 371.0 253.8" fill="none" stroke="#58e83a" stroke-width="1" opacity="0.85"/>
<path d="M344.0 18.3C356.0 23.1 392.3 36.4 416.0 47.0C439.7 57.6 468.9 73.1 486.0 82.0C503.1 90.9 510.6 95.0 518.5 100.5C526.4 106.0 529.9 110.7 533.3 115.3C536.7 119.9 537.7 123.2 538.8 128.2C539.9 133.1 540.1 138.8 540.1 145.0C540.1 151.2 540.5 159.0 538.8 165.5C537.0 172.0 533.6 179.2 529.6 184.0C525.6 188.8 521.6 189.7 514.8 194.0C508.0 198.3 501.3 203.6 489.0 209.8C476.7 216.0 463.1 221.7 440.9 231.0C418.6 240.3 369.7 259.8 355.5 265.6" fill="none" stroke="#0608f4" stroke-width="1.55"/>
<path d="M339.8 30.6C352.5 35.7 396.2 52.7 416.0 61.3C435.8 69.9 444.4 74.7 458.4 82.0C472.4 89.3 490.0 99.3 500.0 105.0C510.0 110.7 514.2 112.0 518.5 116.2C522.8 120.4 524.5 125.2 526.0 130.0C527.5 134.8 527.8 138.9 527.8 144.8C527.8 150.7 527.4 160.2 526.0 165.5C524.6 170.8 522.5 173.5 519.4 176.6C516.3 179.7 515.6 179.7 507.4 184.0C499.2 188.3 485.8 195.1 470.4 202.5C455.0 209.9 434.8 219.8 415.0 228.3C395.2 236.8 362.1 249.2 351.5 253.4" fill="none" stroke="#0608f4" stroke-width="1.55"/>
<path d="M344 18.30000000000001L342.20000000000005 23.80000000000001" stroke="#1d5a3a" stroke-width="1.2"/>
<path d="M351.0 27.2l1.6 -4.3M359.5 30.3l1.6 -4.3M368.0 33.5l1.6 -4.3" stroke="#2d6b45" stroke-width="0.9" fill="none" opacity="0.9"/>
<path d="M375.0 36.0l1.6 -3.7M385.1 40.5l1.6 -3.7M395.2 45.0l1.6 -3.7M405.4 49.5l1.6 -3.7M415.5 54.0l1.6 -3.7M425.6 58.5l1.6 -3.7M435.8 63.0l1.6 -3.7M445.9 67.5l1.6 -3.7M456.0 72.0l1.6 -3.7" stroke="#4fd23c" stroke-width="0.9" fill="none" opacity="0.8"/>
<path d="M508.0 191.6l-1.7 -3.4M500.4 195.3l-1.7 -3.4M492.8 199.0l-1.7 -3.4M485.2 202.7l-1.7 -3.4M477.6 206.4l-1.7 -3.4M470.0 210.1l-1.7 -3.4M462.4 213.8l-1.7 -3.4M454.8 217.5l-1.7 -3.4M447.2 221.2l-1.7 -3.4M439.6 224.9l-1.7 -3.4M432.0 228.6l-1.7 -3.4" stroke="#4fd23c" stroke-width="0.9" fill="none" opacity="0.75"/>
<path d="M514.6 186.39999999999998L517.8 189.60000000000002L527 179.39999999999998" stroke="#58e83a" stroke-width="1.1" fill="none" opacity="0.95"/>
<path d="M534.4 128L536.6 139L536 150L533.4 163L527.6 178" stroke="#6fe04a" stroke-width="1.3" fill="none" opacity="0.8"/>
<path d="M513 106.5L519.5 113L515.2 113.39999999999998ZM527.5 114.5L520.4 118.60000000000002L527 123" stroke="#cf62dc" stroke-width="1" fill="none"/>
<circle cx="489.6" cy="132.10000000000002" r="12.2" fill="url(#ball)" opacity="0.95"/>
<rect x="489.1" y="133.2" width="51" height="11.8" fill="none" stroke="#0e2c37" stroke-width="1"/>
<path d="M511.40000000000003 133.2v11.8" stroke="#0e2c37" stroke-width="1"/>
<path d="M493.3 143.2a6.6 6.4 0 0 1 13.2 0" stroke="#0e2c37" stroke-width="1.3" fill="none"/>
<path d="M498.70000000000005 139.39999999999998q4.6 -3.4 4.6 1.6V150.79999999999998" stroke="#d8eef2" stroke-width="1.3" fill="none" opacity="0.9"/>
<text x="516.3000000000001" y="142.89999999999998" font-family="'Liberation Sans',sans-serif" font-size="9.2" fill="#04222c">0.05</text>
<text x="489.5" y="154.6" font-family="'Liberation Sans','Noto Sans CJK SC',sans-serif" font-size="8.8" fill="#061a22" textLength="47.6" lengthAdjust="spacingAndGlyphs">FCF轮廓度5</text>
<rect x="488.8" y="150.8" width="27.4" height="5" fill="#000"/>
<rect x="489.0" y="155.7" width="27.2" height="11.4" fill="#fff" stroke="#000" stroke-width="0.7"/>
<text x="490.1" y="165.3" font-family="'Liberation Sans',sans-serif" font-size="8.6" fill="#1a1a2a" textLength="25" lengthAdjust="spacingAndGlyphs">PRF4*</text>
<path d="M239.8 210.60000000000002H251.8L260.3 174" stroke="#80d2df" stroke-width="1.5" fill="none"/>
<rect x="214" y="202.3" width="25.8" height="16.2" fill="#000"/>
<rect x="214.6" y="206.70000000000002" width="9.6" height="11.2" fill="#1e1e1e"/>
<rect x="224.2" y="206.9" width="15" height="11" fill="#fff"/>
<text x="214.4" y="216.70000000000002" font-family="'Noto Sans CJK SC','Liberation Sans',sans-serif" font-size="9.8" fill="#f2f2f2" opacity="0.9">圆</text>
<text x="225" y="216.3" font-family="'Liberation Sans',sans-serif" font-size="8.8" fill="#1a1a2a">12*</text>
<rect x="52.70000000000001" y="239.7" width="30" height="30" fill="#6bb6c6" stroke="#000" stroke-width="1.5"/>
<path d="M52.500000000000014 232.0V239.5" stroke="#5fd63a" stroke-width="1"/>
<path d="M51.90000000000001 239.5V269.5" stroke="#5fd63a" stroke-width="0.6" opacity="0.7"/>
<path d="M54.30000000000001 270.7H82.30000000000001" stroke="#e03030" stroke-width="0.8" opacity="0.7"/>
<path d="M82.30000000000001 270.1L94.30000000000001 269.7" stroke="#e84040" stroke-width="1.3" fill="none"/>
<text x="96.60000000000002" y="268.8" font-family="'Liberation Sans',sans-serif" font-size="9.5" fill="#d83a3a">X</text>
</svg>
<div style="left:77px;top:43px;width:251px;height:371px;background:#f0f0f0;box-shadow:0 0 7px 1px rgba(0,0,0,0.40),0 0 0 0.6px rgba(90,90,90,0.35)"></div>
<div style="left:77px;top:43px;width:251px;height:21.6px;background:#fff"></div>
<div class="t" style="left:82.6px;top:47.6px;font-size:9px;color:#a3a3a3;line-height:12px;">构造圆</div>
<div class="t" style="left:82px;top:72.3px;font-size:9px;color:#111;line-height:12px;">ID:</div>
<div class="inp" style="left:96.4px;top:71px;width:112.6px;height:14.6px;"></div>
<div class="t" style="left:99.0px;top:72.7px;font-size:9px;color:#111;line-height:12px">圆12</div>
<div class="t" style="left:82px;top:91.0px;font-size:9px;color:#111;line-height:12px;">查找 ID:</div>
<div class="inp2" style="left:124.5px;top:89.5px;width:84.5px;height:14.3px;"></div>
<div class="t" style="left:82.6px;top:108.9px;font-size:9px;color:#111;line-height:12px;">选择最后特征数:</div>
<div class="inp2" style="left:160.2px;top:107.5px;width:48.8px;height:14.2px;"></div>
<div class="grp" style="left:82.6px;top:125.5px;width:127px;height:16.3px;"></div>
<svg class="ic" style="left:85.8px;top:127.9px" width="12" height="12" viewBox="0 0 12 12"><circle cx="6" cy="6" r="4.3" fill="#fff" stroke="#333" stroke-width="0.9"/></svg>
<div class="t" style="left:98.6px;top:128.0px;font-size:9px;color:#111;line-height:12px;">内</div>
<svg class="ic" style="left:133px;top:127.9px" width="12" height="12" viewBox="0 0 12 12"><circle cx="6" cy="6" r="4.3" fill="#fff" stroke="#333" stroke-width="0.9"/><circle cx="6" cy="6" r="2.3" fill="#333"/></svg>
<div class="t" style="left:145.8px;top:128.0px;font-size:9px;color:#111;line-height:12px;">外</div>
<div class="grp" style="left:82.6px;top:145.5px;width:127px;height:14.8px;"></div>
<svg class="ic" style="left:85.8px;top:147.3px" width="12" height="12" viewBox="0 0 12 12"><circle cx="6" cy="6" r="4.3" fill="#e9e9e9" stroke="#c4c4c4" stroke-width="0.9"/><circle cx="6" cy="6" r="2.3" fill="#bdbdbd"/></svg>
<div class="t" style="left:98.6px;top:147.5px;font-size:9px;color:#9a9a9a;line-height:12px;">2D</div>
<svg class="ic" style="left:133px;top:147.3px" width="12" height="12" viewBox="0 0 12 12"><circle cx="6" cy="6" r="4.3" fill="#fff" stroke="#c4c4c4" stroke-width="0.9"/></svg>
<div class="t" style="left:145.8px;top:147.5px;font-size:9px;color:#9a9a9a;line-height:12px;">3D</div>
<div class="grp" style="left:82.6px;top:165.3px;width:127px;height:144px;"></div>
<div style="left:88px;top:173.2px;width:114.7px;height:14.6px;background:#e2e2e2;border:1px solid #adadad;box-sizing:border-box"></div>
<div class="t" style="left:90.7px;top:174.6px;font-size:9px;color:#111;line-height:12px;">扫描最低点</div>
<svg class="ic" style="left:192.6px;top:178.6px" width="7" height="5" viewBox="0 0 7 5"><path d="M0.5 0.7L3.5 3.8L6.5 0.7" fill="none" stroke="#444" stroke-width="1"/></svg>
<div class="btn" style="left:88px;top:200.2px;width:113.8px;height:15.5px;line-height:15.7px">搜索设置</div>
<div style="left:217px;top:71.5px;width:106.5px;height:14px;background:#f0f0f0;border-right:1px solid #9a9a9a;border-bottom:1px solid #9a9a9a;border-top:1px solid #fdfdfd;border-left:1px solid #fdfdfd;box-sizing:border-box"></div>
<div class="t" style="left:236.6px;top:72.6px;font-size:9px;color:#111;line-height:12px;">排序:程序</div>
<svg class="ic" style="left:283px;top:74.4px" width="5" height="9" viewBox="0 0 5 9"><path d="M2.5 1V8.6" stroke="#111" stroke-width="1"/><path d="M0.3 3.2L2.5 0.2L4.7 3.2Z" fill="#111"/></svg>
<div style="left:309px;top:73.5px;width:1px;height:10px;background:#8a8a8a"></div>
<svg class="ic" style="left:312.6px;top:77.2px" width="6" height="4" viewBox="0 0 6 4"><path d="M0 0H6L3 3.6Z" fill="#111"/></svg>
<div style="left:216.3px;top:86.2px;width:107.5px;height:223.4px;background:#fff;border:1px solid #8a8a8a;border-right-color:#c8c8c8;border-bottom-color:#c8c8c8;box-sizing:border-box"></div>
<svg class="ic" style="left:219.60000000000002px;top:89.39999999999999px" width="10.4" height="10.4" viewBox="0 0 24 24"><circle cx="13" cy="12" r="5" fill="#178fb4"/><circle cx="20" cy="3.6" r="2.8" fill="#178fb4"/><circle cx="20" cy="20.4" r="2.8" fill="#178fb4"/><path d="M13 12L20 3.6M13 12L20 20.4" stroke="#178fb4" stroke-width="1.4"/><circle cx="3" cy="16" r="1.4" fill="#999"/><path d="M6 6L14 12" stroke="#999" stroke-width="0.8"/></svg>
<div class="t" style="left:235px;top:88.8px;font-size:9px;color:#111;line-height:12px;">点1</div>
<svg class="ic" style="left:219.60000000000002px;top:102.66999999999999px" width="10.4" height="10.4" viewBox="0 0 24 24"><rect x="0.6" y="0.6" width="22.8" height="22.8" fill="#178fb4"/><circle cx="12" cy="12" r="7.4" fill="#fff"/></svg>
<div class="t" style="left:235px;top:102.07px;font-size:9px;color:#111;line-height:12px;">圆1</div>
<svg class="ic" style="left:219.60000000000002px;top:115.93999999999998px" width="10.4" height="10.4" viewBox="0 0 24 24"><rect x="0.6" y="0.6" width="22.8" height="22.8" fill="#178fb4"/><circle cx="12" cy="12" r="7.4" fill="#fff"/></svg>
<div class="t" style="left:235px;top:115.33999999999999px;font-size:9px;color:#111;line-height:12px;">圆2</div>
<svg class="ic" style="left:219.60000000000002px;top:129.21px" width="10.4" height="10.4" viewBox="0 0 24 24"><path d="M1.5 4.5Q10 3 11.5 12Q13 21 22.5 19.5" stroke="#178fb4" stroke-width="5.6" fill="none"/></svg>
<div class="t" style="left:235px;top:128.60999999999999px;font-size:9px;color:#111;line-height:12px;"><span class="lt">PRF2</span></div>
<svg class="ic" style="left:219.60000000000002px;top:142.48000000000002px" width="10.4" height="10.4" viewBox="0 0 24 24"><rect x="0.6" y="0.6" width="22.8" height="22.8" fill="#178fb4"/><circle cx="12" cy="12" r="7.4" fill="#fff"/></svg>
<div class="t" style="left:235px;top:141.88px;font-size:9px;color:#111;line-height:12px;">圆3</div>
<svg class="ic" style="left:219.60000000000002px;top:155.75px" width="10.4" height="10.4" viewBox="0 0 24 24"><rect x="0.6" y="0.6" width="22.8" height="22.8" fill="#e0962c"/><circle cx="12" cy="12" r="7.4" fill="#fff"/></svg>
<div class="t" style="left:235px;top:155.14999999999998px;font-size:9px;color:#111;line-height:12px;">圆4</div>
<div style="left:217.3px;top:167.62px;width:105.5px;height:13.2px;background:#0078d7"></div>
<svg class="ic" style="left:219.60000000000002px;top:169.02px" width="10.4" height="10.4" viewBox="0 0 24 24"><path d="M1.5 4.5Q10 3 11.5 12Q13 21 22.5 19.5" stroke="#2fae9a" stroke-width="5.6" fill="none"/></svg>
<div class="t" style="left:235px;top:168.42px;font-size:9px;color:#fff;line-height:12px;"><span class="lt">PRF4</span></div>
<div class="t" style="left:271px;top:168.42px;font-size:9px;color:#fff;line-height:12px;">1</div>
<svg class="ic" style="left:219.60000000000002px;top:182.29000000000002px" width="10.4" height="10.4" viewBox="0 0 24 24"><path d="M1.5 4.5Q10 3 11.5 12Q13 21 22.5 19.5" stroke="#178fb4" stroke-width="5.6" fill="none"/></svg>
<div class="t" style="left:235px;top:181.69px;font-size:9px;color:#111;line-height:12px;"><span class="lt">PRF5</span></div>
<svg class="ic" style="left:219.60000000000002px;top:195.56px" width="10.4" height="10.4" viewBox="0 0 24 24"><rect x="0.6" y="0.6" width="22.8" height="22.8" fill="#e0962c"/><circle cx="12" cy="12" r="7.4" fill="#fff"/></svg>
<div class="t" style="left:235px;top:194.95999999999998px;font-size:9px;color:#111;line-height:12px;">圆9</div>
<div class="grp" style="left:81.6px;top:317.6px;width:241.4px;height:68.4px;"></div>
<div style="left:86px;top:312px;width:47px;height:12px;background:#f0f0f0"></div>
<div class="t" style="left:87.5px;top:312.5px;font-size:9px;color:#111;line-height:12px;">特征理论值</div>
<div style="left:87.2px;top:328.6px;width:9.3px;height:9.4px;background:#fff;border:1px solid #4d4d4d;box-sizing:border-box"></div>
<div class="t" style="left:99px;top:327.6px;font-size:9px;color:#111;line-height:12px;">指定理论值</div>
<div class="t" style="left:269.8px;top:329.0px;font-size:9px;color:#111;line-height:12px;">直</div>
<div class="t" style="left:85.1px;top:344.3px;font-size:9px;color:#111;line-height:12px;">X:</div>
<div class="inpd" style="left:94.4px;top:342.1px;width:44.2px;height:16.1px;"></div>
<div class="t" style="left:97.0px;top:343.75000000000006px;font-size:9px;color:#9a9a9a;line-height:12px">0</div>
<div class="t" style="left:85.1px;top:367.8px;font-size:9px;color:#111;line-height:12px;">I:</div>
<div class="inpd" style="left:94.4px;top:366.5px;width:44.2px;height:16.2px;"></div>
<div class="t" style="left:97.0px;top:368.20000000000005px;font-size:9px;color:#9a9a9a;line-height:12px">1</div>
<div class="t" style="left:144.3px;top:344.3px;font-size:9px;color:#111;line-height:12px;">Y:</div>
<div class="inpd" style="left:153.1px;top:342.1px;width:44.2px;height:16.1px;"></div>
<div class="t" style="left:155.7px;top:343.75000000000006px;font-size:9px;color:#9a9a9a;line-height:12px">0</div>
<div class="t" style="left:144.3px;top:367.8px;font-size:9px;color:#111;line-height:12px;">J:</div>
<div class="inpd" style="left:153.1px;top:366.5px;width:44.2px;height:16.2px;"></div>
<div class="t" style="left:155.7px;top:368.20000000000005px;font-size:9px;color:#9a9a9a;line-height:12px">0</div>
<div class="t" style="left:203.7px;top:344.3px;font-size:9px;color:#111;line-height:12px;">Z:</div>
<div class="inpd" style="left:213px;top:342.1px;width:44.2px;height:16.1px;"></div>
<div class="t" style="left:215.6px;top:343.75000000000006px;font-size:9px;color:#9a9a9a;line-height:12px">0</div>
<div class="t" style="left:203.7px;top:367.8px;font-size:9px;color:#111;line-height:12px;">K:</div>
<div class="inpd" style="left:213px;top:366.5px;width:44.2px;height:16.2px;"></div>
<div class="t" style="left:215.6px;top:368.20000000000005px;font-size:9px;color:#9a9a9a;line-height:12px">0</div>
<div class="inpd" style="left:268.4px;top:342.1px;width:42.6px;height:16.1px;"></div>
<div class="t" style="left:271.0px;top:343.75000000000006px;font-size:9px;color:#9a9a9a;line-height:12px">1</div>
<div class="btn" style="left:149.8px;top:394.2px;width:53.6px;height:15.700000000000001px;line-height:15.9px">清除(C)</div>
<div class="btn" style="left:209.2px;top:394.2px;width:53.6px;height:15.700000000000001px;line-height:15.9px">创建</div>
<div class="btn" style="left:269.3px;top:394.2px;width:53.5px;height:15.700000000000001px;line-height:15.9px">关闭</div>
<div style="left:278.4px;top:193.8px;width:207.6px;height:162.2px;background:#f0f0f0;box-shadow:0 0 7px 1px rgba(0,0,0,0.40),0 0 0 0.6px rgba(90,90,90,0.35)"></div>
<div style="left:278.4px;top:193.8px;width:207.6px;height:22.4px;background:#fff"></div>
<div class="t" style="left:284.8px;top:198.8px;font-size:9px;color:#a3a3a3;line-height:12px;">圆的最小搜索设置</div>
<svg class="ic" style="left:470.6px;top:200.4px" width="8" height="8" viewBox="0 0 8 8"><path d="M0.4 0.4L7.6 7.6M7.6 0.4L0.4 7.6" stroke="#8c8c8c" stroke-width="0.9" fill="none"/></svg>
<div class="grp" style="left:287.5px;top:229.4px;width:89.3px;height:74.4px;"></div>
<div style="left:291px;top:224px;width:47.5px;height:11px;background:#f0f0f0"></div>
<div class="t" style="left:292.5px;top:223.7px;font-size:9px;color:#111;line-height:12px;">圆的起始点</div>
<div class="grp" style="left:388.6px;top:229.4px;width:89.1px;height:74.4px;"></div>
<div style="left:393px;top:224px;width:38.6px;height:11px;background:#f0f0f0"></div>
<div class="t" style="left:394.6px;top:223.7px;font-size:9px;color:#111;line-height:12px;">向下方向</div>
<div class="t" style="left:295.9px;top:240.4px;font-size:9px;color:#111;line-height:12px;">X:</div>
<div class="inp3" style="left:307.2px;top:237.7px;width:59.2px;height:16.9px;"></div>
<div class="t" style="left:309.8px;top:239.14999999999998px;font-size:9px;color:#111;line-height:12px">8</div>
<div class="t" style="left:397.9px;top:240.4px;font-size:9px;color:#111;line-height:12px;">I:</div>
<div class="inp3" style="left:409px;top:237.7px;width:59px;height:16.9px;"></div>
<div class="t" style="left:411.6px;top:239.14999999999998px;font-size:9px;color:#111;line-height:12px">1</div>
<div class="t" style="left:295.9px;top:262.09999999999997px;font-size:9px;color:#111;line-height:12px;">Y:</div>
<div class="inp3" style="left:307.2px;top:259.4px;width:59.2px;height:16.9px;"></div>
<div class="t" style="left:309.8px;top:260.84999999999997px;font-size:9px;color:#111;line-height:12px">0</div>
<div class="t" style="left:397.9px;top:262.09999999999997px;font-size:9px;color:#111;line-height:12px;">J:</div>
<div class="inp3" style="left:409px;top:259.4px;width:59px;height:16.9px;"></div>
<div class="t" style="left:411.6px;top:260.84999999999997px;font-size:9px;color:#111;line-height:12px">0</div>
<div class="t" style="left:295.9px;top:283.79999999999995px;font-size:9px;color:#111;line-height:12px;">Z:</div>
<div class="inp3" style="left:307.2px;top:281.09999999999997px;width:59.2px;height:16.9px;"></div>
<div class="t" style="left:309.8px;top:282.54999999999995px;font-size:9px;color:#111;line-height:12px">-6.33</div>
<div class="t" style="left:397.9px;top:283.79999999999995px;font-size:9px;color:#111;line-height:12px;">K:</div>
<div class="inp3" style="left:409px;top:281.09999999999997px;width:59px;height:16.9px;"></div>
<div class="t" style="left:411.6px;top:282.54999999999995px;font-size:9px;color:#111;line-height:12px">0</div>
<div class="t" style="left:287.2px;top:313.4px;font-size:9px;color:#111;line-height:12px;">直径:</div>
<div class="inp3" style="left:360.2px;top:310.2px;width:44.6px;height:16.5px;"></div>
<div class="t" style="left:362.8px;top:311.45px;font-size:9px;color:#111;line-height:12px">0.8</div>
<div class="btn" style="left:362.4px;top:332.3px;width:53.6px;height:15.5px;line-height:15.7px">确定</div>
<div class="btn" style="left:423.2px;top:332.3px;width:53.6px;height:15.5px;line-height:15.7px">取消</div>
</div>
</body></html>
